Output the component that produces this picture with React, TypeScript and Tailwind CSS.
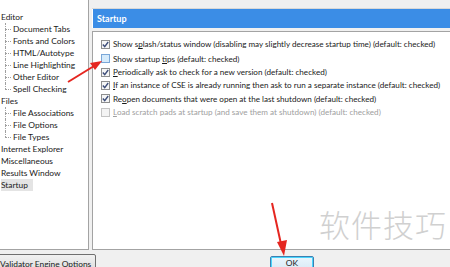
import React from 'react';

type Opt = { pre: string; u: string; post: string; checked: boolean; hover?: boolean; disabled?: boolean };

const options: Opt[] = [
  { pre: 'Show s', u: 'p', post: 'lash/status window (disabling may slightly decrease startup time) (default: checked)', checked: true },
  { pre: 'Show startup ', u: 't', post: 'ips (default: checked)', checked: false, hover: true },
  { pre: '', u: 'P', post: 'eriodically ask to check for a new version (default: checked)', checked: true },
  { pre: '', u: 'I', post: 'f an instance of CSE is already running then ask to run a separate instance (default: checked)', checked: true },
  { pre: 'Re', u: 'o', post: 'pen documents that were open at the last shutdown (default: checked)', checked: true },
  { pre: '', u: 'L', post: 'oad scratch pads at startup (and save them at shutdown) (default: checked)', checked: false, disabled: true },
];

const tree: { label: string; child?: boolean; last?: boolean; selected?: boolean }[] = [
  { label: 'Editor' },
  { label: 'Document Tabs', child: true },
  { label: 'Fonts and Colors', child: true },
  { label: 'HTML/Autotype', child: true },
  { label: 'Line Highlighting', child: true },
  { label: 'Other Editor', child: true },
  { label: 'Spell Checking', child: true, last: true },
  { label: 'Files' },
  { label: 'File Associations', child: true },
  { label: 'File Options', child: true },
  { label: 'File Types', child: true, last: true },
  { label: 'Internet Explorer' },
  { label: 'Miscellaneous' },
  { label: 'Results Window' },
  { label: 'Startup', selected: true },
];

function Check({ opt }: { opt: Opt }) {
  const box = opt.disabled
    ? 'border-[#c4c4c4] bg-[#f4f4f4]'
    : opt.hover
    ? 'border-[#7aa7d8] bg-[#d6ebfb]'
    : 'border-[#8e8f8f] bg-[#f6f6f6]';
  return (
    <span className={`w-[9px] h-[9px] border ${box} flex items-center justify-center shrink-0`}>
      {opt.checked && (
        <svg width="7" height="7" viewBox="0 0 7 7">
          <path d="M0.8 3.6 L2.7 5.6 L6.2 1" stroke="#3f4f7a" strokeWidth="1.4" fill="none" />
        </svg>
      )}
    </span>
  );
}

export default function App() {
  return (
    <div className="relative w-[450px] h-[267px] overflow-hidden bg-[#f0f0f0] font-['Lato',sans-serif] text-[8.1px] text-[#1a1a1a]">
      <div className="flex h-[250px]">
        {/* Tree */}
        <div className="w-[89px] shrink-0 bg-white border-r border-b border-[#a3a3a3] pt-[11px] text-[8.4px]">
          {tree.map((t, i) => (
            <div key={i} className="relative h-[12px] flex items-center whitespace-nowrap">
              {t.child && (
                <>
                  <span className={`absolute left-[5px] top-0 ${t.last ? 'h-[6px]' : 'h-[12px]'} border-l border-dotted border-[#a0a0a0]`} />
                  <span className="absolute left-[5px] top-[6px] w-[6px] border-t border-dotted border-[#a0a0a0]" />
                </>
              )}
              <span className={`${t.child ? 'ml-[13px]' : 'ml-[1px]'} leading-[12px] ${t.selected ? 'bg-[#e4e4e4] pr-[5px]' : ''}`}>
                {t.label}
              </span>
            </div>
          ))}
        </div>

        {/* Right panel */}
        <div className="flex-1 flex flex-col pl-[3px]">
          <div className="h-[9px] border-b border-[#d8d8d8]" />
          <div className="h-[19px] bg-[#3b8de6] border-l border-white flex items-center pl-[4px] text-white font-bold text-[9px]">
            Startup
          </div>
          <div className="mt-[3px] flex-1 bg-white border border-r-0 border-[#a3a3a3] pl-[8px] pt-[5px]">
            {options.map((o, i) => (
              <div key={i} className={`flex items-center gap-[3px] ${i === 0 ? 'h-[15px]' : 'h-[13.4px]'} whitespace-nowrap ${o.disabled ? 'text-[#a0a0a0]' : ''}`}>
                <Check opt={o} />
                <span>
                  {o.pre}
                  <u>{o.u}</u>
                  {o.post}
                </span>
              </div>
            ))}
          </div>
        </div>
      </div>

      {/* Buttons */}
      <div className="relative h-[17px]">
        <button className="absolute left-[-8px] top-[4px] w-[104px] h-[18px] rounded-[2px] border border-[#707070] bg-gradient-to-b from-[#f2f2f2] to-[#dcdcdc] text-[8.4px] text-left pl-[7px] pt-[2px] leading-[12px] whitespace-nowrap">
          Validator Engine Options
        </button>
        <button className="absolute left-[270px] top-[6px] w-[44px] h-[18px] rounded-[2px] border border-[#3c7fb1] bg-gradient-to-b from-[#eaf6fd] to-[#d4e7f4] text-[8.4px] leading-[12px] pb-[5px] shadow-[inset_0_0_0_1px_#48d5fd]">
          OK
        </button>
      </div>

      {/* Watermark */}
      <div className="absolute left-[319px] top-[204px] text-[31px] leading-[40px] text-[#d0d0d0] font-['Noto_Sans_CJK_SC',sans-serif] font-light tracking-[1px]">
        软件技巧
      </div>

      {/* Red arrows */}
      <svg className="absolute left-0 top-0 pointer-events-none" width="450" height="267" viewBox="0 0 450 267">
        <line x1="68" y1="82" x2="94" y2="66" stroke="#e52620" strokeWidth="2" />
        <polygon points="102,61 90,63 95,70" fill="#e52620" />
        <line x1="272" y1="203" x2="281" y2="244" stroke="#e52620" strokeWidth="2" />
        <polygon points="284,256 277,242 287,240" fill="#e52620" />
      </svg>
    </div>
  );
}
